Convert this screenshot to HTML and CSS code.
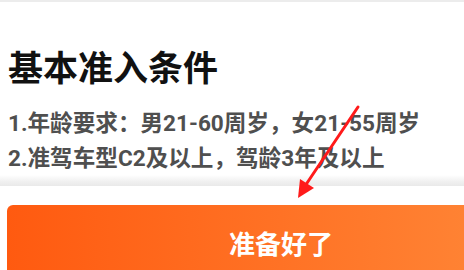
FILE: index.html
```html
<!DOCTYPE html>
<html lang="zh-CN">
<head>
    <meta charset="UTF-8">
    <meta name="viewport" content="width=device-width, initial-scale=1.0">
    <title>基本准入条件</title>
    <link rel="stylesheet" href="styles.css">
</head>
<body>
    <div class="page">
        <div class="rules">
            <h1 class="rules-title">基本准入条件</h1>
            <p class="rule">1.年龄要求：男21-60周岁，女21-55周岁</p>
            <p class="rule">2.准驾车型C2及以上，驾龄3年及以上</p>
        </div>
        <div class="divider"></div>
        <div class="footer">
            <button class="ready-btn">准备好了</button>
        </div>
        <svg class="arrow" width="464" height="270" viewBox="0 0 464 270">
            <line x1="358" y1="107" x2="303" y2="189" stroke="#ff1a1a" stroke-width="3" stroke-linecap="round"/>
            <polygon points="298,198 300,179 314,188" fill="#ff1a1a"/>
        </svg>
    </div>
</body>
</html>
```

FILE: styles.css
```css
body {
    margin: 0;
    font-family: "Noto Sans CJK SC", "Noto Sans", sans-serif;
    background-color: #ffffff;
    overflow: hidden;
}
.page {
    position: relative;
    width: 464px;
    height: 270px;
    overflow: hidden;
    border-top: 2px solid #ececec;
    box-sizing: border-box;
}
.rules {
    padding: 46px 8px 0;
    height: 173px;
    box-sizing: border-box;
}
.rules-title {
    margin: 0 0 23px;
    font-size: 35px;
    line-height: 35px;
    font-weight: 700;
    color: #111111;
}
.rule {
    margin: 0;
    font-family: Roboto, "Noto Sans CJK SC", sans-serif;
    font-size: 22.6px;
    line-height: 35px;
    font-weight: 700;
    color: #4f4f4f;
    white-space: nowrap;
}
.divider {
    height: 11px;
    background: linear-gradient(to bottom, #ffffff, #f1f1f1 55%, #e9e9e9);
}
.footer {
    padding: 19px 0 0 7px;
}
.ready-btn {
    width: 548px;
    height: 76px;
    border: none;
    border-radius: 6px;
    background: linear-gradient(to right, #ff5a10, #ff8a3a);
    color: #ffffff;
    font-family: inherit;
    font-size: 26px;
    font-weight: 700;
    padding: 0 0 2px;
    cursor: pointer;
}
.arrow {
    position: absolute;
    top: -2px;
    left: 0;
    pointer-events: none;
}
```
